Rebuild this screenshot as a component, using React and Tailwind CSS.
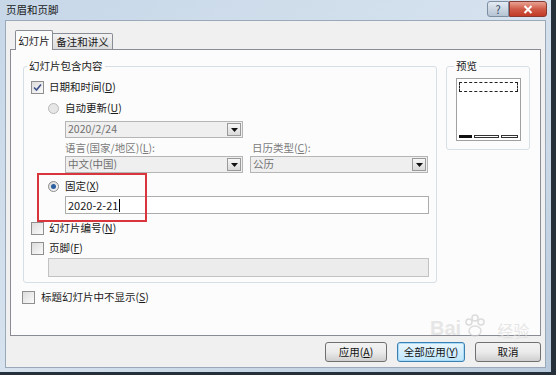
const FONT = { fontFamily: '"Microsoft YaHei", "Noto Sans CJK SC", "Noto Sans", sans-serif' };

function CheckBox({ checked }) {
  return (
    <span className="w-[13px] h-[13px] border border-[#8f8f8f] bg-gradient-to-br from-[#dcdcdc] to-[#fbfbfb] flex items-center justify-center shrink-0">
      {checked && (
        <svg width="9" height="9" viewBox="0 0 9 9">
          <path d="M1 4.5 L3.5 7 L8 1.5" fill="none" stroke="#3c4f88" strokeWidth="1.6" />
        </svg>
      )}
    </span>
  );
}

function Radio({ on, dim }) {
  return (
    <span
      className={
        "w-[11px] h-[11px] rounded-full border flex items-center justify-center shrink-0 " +
        (dim ? "border-[#b8b8b8] bg-[#e6e6e6]" : "border-[#8a8a8a] bg-gradient-to-br from-[#d7d7d7] to-[#fafafa]")
      }
    >
      {on && <span className="w-[5px] h-[5px] rounded-full bg-[#2c5fa0]" />}
    </span>
  );
}

function Arrow() {
  return (
    <span className="w-[14px] h-[13px] border border-[#9a9a9a] bg-gradient-to-b from-[#f6f6f6] to-[#dadada] flex items-center justify-center mr-[1px]">
      <svg width="7" height="4" viewBox="0 0 7 4">
        <path d="M0 0 L7 0 L3.5 4 Z" fill="#111" />
      </svg>
    </span>
  );
}

function Select({ value, width }) {
  return (
    <div
      className="h-[17px] border border-[#b5b5b5] bg-[#efefef] flex items-center justify-between pl-[2px] text-[10.5px] text-[#707070]"
      style={{ width }}
    >
      <span className="leading-none">{value}</span>
      <Arrow />
    </div>
  );
}

function Btn({ children, w, focus }) {
  return (
    <div
      className={
        "h-[20px] rounded-[3px] border flex items-center justify-center text-[10.5px] text-[#111] whitespace-nowrap " +
        (focus
          ? "border-[#3c7fb1] bg-gradient-to-b from-[#eaf6fd] to-[#bee6fd] shadow-[inset_0_0_0_1px_#a8dbf7]"
          : "border-[#707070] bg-gradient-to-b from-[#f2f2f2] via-[#ebebeb] to-[#cfcfcf]")
      }
      style={{ width: w }}
    >
      {children}
    </div>
  );
}

export default function App() {
  return (
    <div className="w-[556px] h-[375px] bg-[#26303b] overflow-hidden" style={FONT}>
      <div className="w-[551px] h-[372px] bg-gradient-to-br from-[#c7d7e8] via-[#d6e2ee] to-[#b9cadc] flex flex-col relative">
        {/* title bar */}
        <div className="h-[20px] flex items-start shrink-0">
          <span className="text-[10.5px] text-[#1a1a1a] ml-[6px] mt-[5px] leading-none">页眉和页脚</span>
          <div className="ml-auto mt-[1px] flex mr-[4px]">
            <div className="w-[22px] h-[16px] border border-[#7d8ea3] rounded-l-[3px] bg-gradient-to-b from-[#e4ebf3] to-[#b5c3d3] flex items-center justify-center text-[11px] text-[#33475e] leading-none">
              ?
            </div>
            <div className="w-[38px] h-[16px] border border-[#8b3a32] rounded-r-[3px] bg-gradient-to-b from-[#e8a293] via-[#cf5b48] to-[#c23a26] flex items-center justify-center">
              <svg width="10" height="9" viewBox="0 0 10 9">
                <path d="M1.5 1 L8.5 8 M8.5 1 L1.5 8" stroke="#fff" strokeWidth="2" />
              </svg>
            </div>
          </div>
        </div>

        {/* client */}
        <div className="mx-[5px] h-[348px] bg-[#f0f0f0] border border-[#9aa9ba] flex flex-col">
          <div className="mt-[10px] ml-[9px] flex items-end h-[19px] text-[10.5px] text-[#1a1a1a] whitespace-nowrap">
            <div className="relative z-10 w-[38px] h-[20px] bg-[#fcfcfc] border border-b-0 border-[#898c95] rounded-t-[2px] flex items-center justify-center">
              幻灯片
            </div>
            <div className="w-[60px] h-[17px] bg-gradient-to-b from-[#f2f2f2] to-[#dcdcdc] border border-l-0 border-[#898c95] rounded-tr-[2px] flex items-center justify-center">
              备注和讲义
            </div>
          </div>

          {/* tab panel */}
          <div className="ml-[4px] -mt-[1px] w-[531px] h-[287px] bg-[#fcfcfc] border border-[#898c95] flex flex-col">
            <div className="flex items-start">
              {/* main group */}
              <div className="relative ml-[12px] mt-[16px] w-[414px] h-[217px] border border-[#d5dfe5] rounded-[3px] flex flex-col pt-[12px] text-[10.5px] text-[#1a1a1a] whitespace-nowrap">
                <span className="absolute -top-[9px] left-[3px] bg-[#fcfcfc] px-[2px] leading-[16px]">幻灯片包含内容</span>

                <div className="h-[16px] flex items-center pl-[7px]">
                  <CheckBox checked />
                  <span className="ml-[5px]">日期和时间(<u>D</u>)</span>
                </div>
                <div className="mt-[5px] h-[16px] flex items-center pl-[24px]">
                  <Radio dim />
                  <span className="ml-[6px]">自动更新(<u>U</u>)</span>
                </div>
                <div className="mt-[5px] pl-[41px]">
                  <Select value="2020/2/24" width={178} />
                </div>
                <div className="mt-[3px] h-[14px] flex items-center text-[#7a7a7a] leading-none">
                  <span className="ml-[41px] w-[187px]">语言(国家/地区)(<u>L</u>):</span>
                  <span>日历类型(<u>C</u>):</span>
                </div>
                <div className="mt-[1px] flex pl-[41px] gap-[7px]">
                  <Select value="中文(中国)" width={178} />
                  <Select value="公历" width={178} />
                </div>
                <div className="mt-[5px] h-[16px] flex items-center pl-[24px]">
                  <Radio on />
                  <span className="ml-[6px]">固定(<u>X</u>)</span>
                </div>
                <div className="mt-[2px] ml-[41px] w-[364px] h-[18px] border border-[#acacac] bg-white flex items-center pl-[2px]">
                  <span className="leading-none text-[11px]">2020-2-21</span>
                  <span className="w-[1px] h-[13px] bg-black ml-[1px]" />
                </div>
                <div className="mt-[6px] h-[16px] flex items-center pl-[7px]">
                  <CheckBox />
                  <span className="ml-[5px]">幻灯片编号(<u>N</u>)</span>
                </div>
                <div className="mt-[4px] h-[16px] flex items-center pl-[7px]">
                  <CheckBox />
                  <span className="ml-[5px]">页脚(<u>F</u>)</span>
                </div>
                <div className="mt-[2px] ml-[24px] w-[381px] h-[19px] border border-[#c2c2c2] bg-[#ececec]" />

                {/* red highlight */}
                <div className="absolute left-[13px] top-[106px] w-[110px] h-[49px] border-2 border-[#d8353d]" />
              </div>

              {/* preview group */}
              <div className="relative ml-[9px] mt-[16px] w-[84px] h-[84px] border border-[#d5dfe5] rounded-[3px] flex justify-center pt-[11px]">
                <span className="absolute -top-[9px] left-[7px] bg-[#fcfcfc] px-[2px] text-[10.5px] leading-[16px] text-[#1a1a1a]">预览</span>
                <div className="w-[65px] h-[63px] bg-white border border-[#a0a0a0] flex flex-col px-[2px] pt-[3px]">
                  <div className="h-[10px] border border-dashed border-[#222]" />
                  <div className="mt-auto mb-[2px] flex gap-[2px] h-[3px]">
                    <div className="w-[13px] bg-[#111]" />
                    <div className="w-[25px] border border-[#333]" />
                    <div className="flex-1 border border-[#333]" />
                  </div>
                </div>
              </div>
            </div>

            <div className="mt-[6px] ml-[11px] h-[16px] flex items-center text-[10.5px] text-[#1a1a1a] whitespace-nowrap">
              <CheckBox />
              <span className="ml-[6px]">标题幻灯片中不显示(<u>S</u>)</span>
            </div>
          </div>

          {/* buttons */}
          <div className="mt-[6px] flex justify-end pr-[4px] gap-[10px]">
            <Btn w={62}>应用(<u>A</u>)</Btn>
            <Btn w={68} focus>全部应用(<u>Y</u>)</Btn>
            <Btn w={66}>取消</Btn>
          </div>
        </div>

        {/* watermark */}
        <div className="absolute left-[430px] top-[314px] flex items-end text-[#dedede] opacity-70 leading-none pointer-events-none">
          <span className="text-[20px] font-bold" style={{ fontFamily: '"Liberation Sans", sans-serif' }}>Bai</span>
          <svg width="24" height="24" viewBox="0 0 24 24" className="mx-[2px]">
            <circle cx="6" cy="8" r="3" fill="none" stroke="#cfcfcf" strokeWidth="1.5" />
            <circle cx="12" cy="4" r="3" fill="none" stroke="#cfcfcf" strokeWidth="1.5" />
            <circle cx="18" cy="8" r="3" fill="none" stroke="#cfcfcf" strokeWidth="1.5" />
            <ellipse cx="12" cy="17" rx="6" ry="5" fill="none" stroke="#cfcfcf" strokeWidth="1.5" />
          </svg>
          <span className="text-[16px] ml-[8px]">经验</span>
        </div>
      </div>
    </div>
  );
}
